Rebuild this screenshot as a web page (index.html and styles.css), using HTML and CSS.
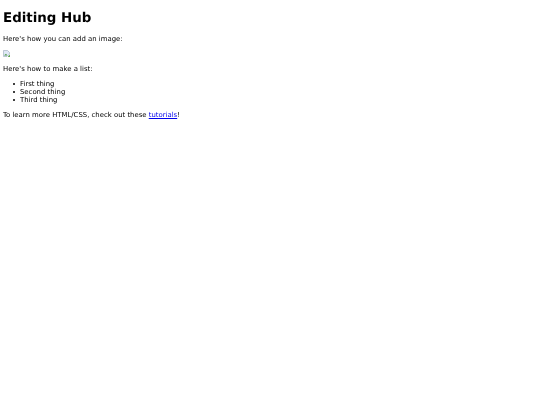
FILE: index.html
```html
<!DOCTYPE html>
<html lang="en">
<head>
    <meta charset="UTF-8">
    <title>Editing Hub</title>
    <link rel="stylesheet" href="styles.css">
</head>
<body>
    <div class="page">
        <h1>Editing Hub</h1>
        <p>Here's how you can add an image:</p>
        <p class="image-row">
            <!-- Broken image placeholder -->
            <svg class="broken-image" viewBox="0 0 7 7" width="7" height="7" role="img" aria-label="Broken image">
                <path d="M0.5 0.5H4.5L6.5 2.5V4L4 6.5H0.5Z" fill="#dfe8f6" stroke="#98a8bc" stroke-width="0.6"/>
                <path d="M1 5.5L3 3.8L4.5 5.5Z" fill="#4f9a4a"/>
                <path d="M5 6.5L7 4.5V7H5Z" fill="#5fa452"/>
            </svg>
        </p>
        <p>Here's how to make a list:</p>
        <ul>
            <li>First thing</li>
            <li>Second thing</li>
            <li>Third thing</li>
        </ul>
        <p>To learn more HTML/CSS, check out these <a href="#">tutorials</a>!</p>
    </div>
</body>
</html>
```

FILE: styles.css
```css
body {
    margin: 0;
    background-color: #ffffff;
    color: #000000;
    font-family: "DejaVu Sans", Verdana, sans-serif;
    font-size: 6.9px;
    line-height: 8px;
    text-rendering: geometricPrecision;
}

/* the reference is a soft, scaled down shot */
.page {
    padding: 11px 3px 0;
    filter: blur(0.25px);
}

h1 {
    margin: 0 0 9px;
    font-size: 13.4px;
    line-height: 15px;
    font-weight: bold;
}

p {
    margin: 0 0 7px;
}

.image-row {
    display: flex;
    height: 8px;
}

.broken-image {
    display: block;
}

ul {
    margin: 0 0 7px;
    padding-left: 10px;
    list-style: none;
}

li {
    display: flex;
    align-items: center;
}

li::before {
    content: "";
    width: 2px;
    height: 2px;
    margin-right: 5px;
    border-radius: 50%;
    background-color: #000000;
}

a {
    color: #0000ee;
}
```
